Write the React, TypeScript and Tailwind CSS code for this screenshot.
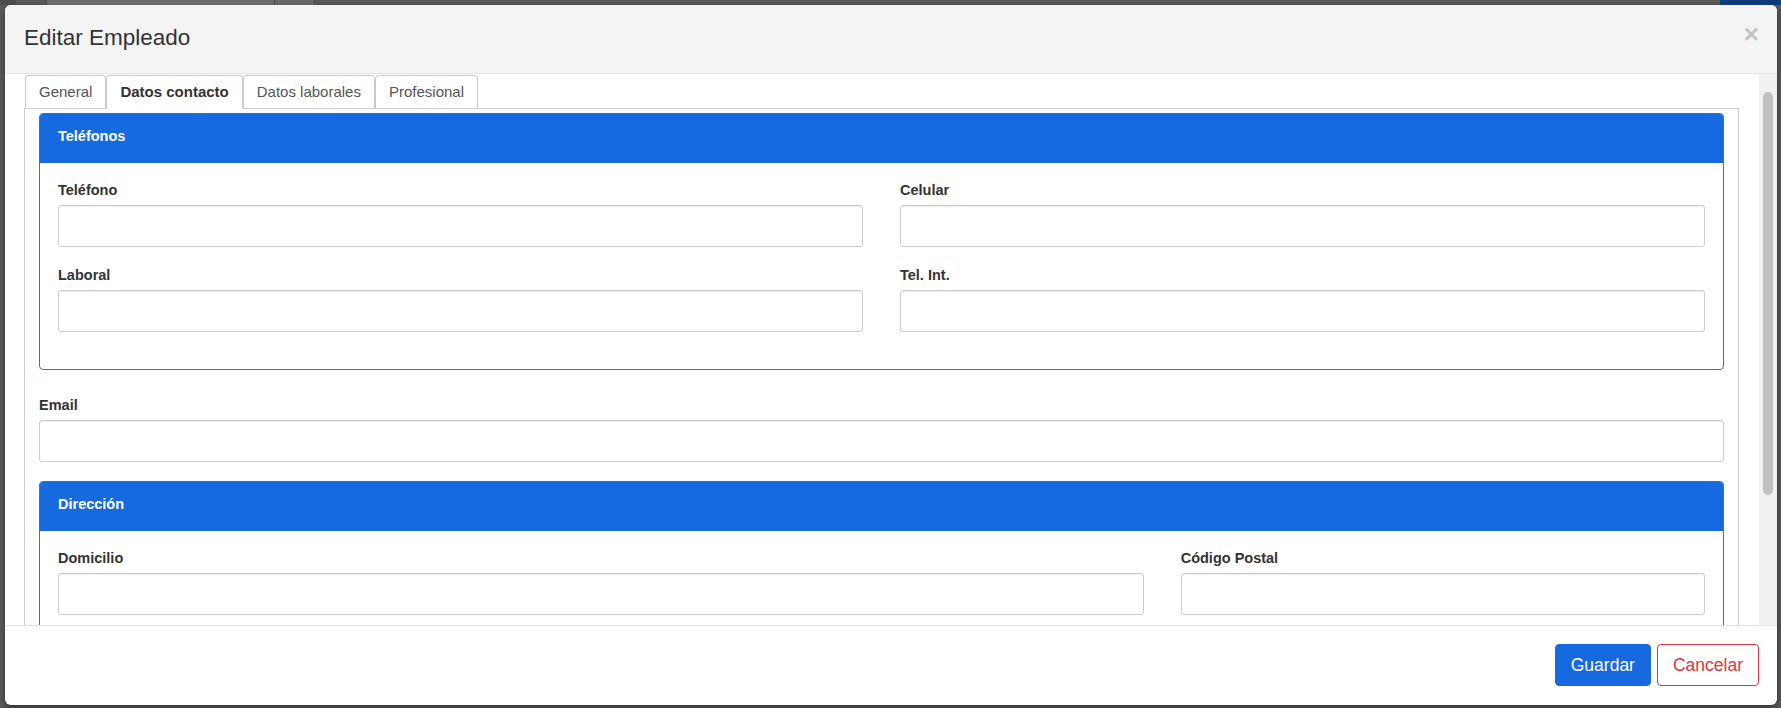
import React from 'react';

const Field: React.FC<{ label: string; className?: string }> = ({ label, className }) => (
  <div className={className}>
    <label className="block mb-[5px] leading-[20px] text-[14.5px] font-bold text-[#333]">{label}</label>
    <input
      type="text"
      className="block w-full h-[42px] rounded-[3px] border border-[#ccc] bg-white shadow-[inset_0_1px_1px_rgba(0,0,0,0.075)] outline-none"
    />
  </div>
);

const Panel: React.FC<{ title: string; children: React.ReactNode; className?: string }> = ({ title, children, className }) => (
  <div className={`rounded-[4px] border border-[#2a73d9] overflow-hidden ${className ?? ''}`}>
    <div className="h-[49px] bg-[#1769e0] px-[18px] pt-[12px] text-[14.5px] leading-[20px] font-bold text-white">{title}</div>
    {children}
  </div>
);

const tabs = ['General', 'Datos contacto', 'Datos laborales', 'Profesional'];

const App: React.FC = () => {
  return (
    <div className="w-[1781px] h-[708px] overflow-hidden bg-[#5c5c5c] font-['Liberation_Sans',Arial,sans-serif]">
      {/* page behind the backdrop */}
      <div className="flex h-[5px]">
        <div className="w-[16px] bg-[#4a4a4a]" />
        <div className="ml-[30px] w-[229px] bg-[#6a6a6a] border-x border-[#4a4a4a]" />
        <div className="w-[40px] bg-[#666] border-r border-[#4a4a4a]" />
        <div className="flex-1" />
        <div className="w-[61px] bg-[#0d3a7a]" />
      </div>

      <div className="ml-[5px] w-[1772px] h-[700px] flex flex-col rounded-[6px] bg-white overflow-hidden shadow-[0_3px_9px_rgba(0,0,0,0.5)]">
        {/* header */}
        <div className="h-[69px] shrink-0 flex items-start justify-between bg-[#f4f4f4] border-b border-[#e5e5e5] pl-[19px] pr-[18px]">
          <h4 className="mt-[21px] text-[22.5px] leading-[23px] text-[#333]">Editar Empleado</h4>
          <span className="mt-[16px] text-[26px] leading-none font-bold text-[#c2c2c2]">×</span>
        </div>

        {/* body */}
        <div className="flex-1 flex min-h-0">
          <div className="flex-1 min-w-0 overflow-hidden pl-[19px] pr-[20px] pt-px">
            <div className="flex items-end h-[34px] border-b border-[#ccc] pl-px">
              {tabs.map((t, i) =>
                i === 1 ? (
                  <div
                    key={t}
                    className="h-[34px] -mb-px flex items-center px-[13px] border border-b-0 border-[#ccc] rounded-t-[4px] bg-white text-[15px] font-bold text-[#333]"
                  >
                    {t}
                  </div>
                ) : (
                  <div
                    key={t}
                    className="h-[33px] flex items-center px-[13px] border border-b-0 border-[#ccc] rounded-t-[4px] bg-white text-[15px] text-[#555]"
                  >
                    {t}
                  </div>
                )
              )}
            </div>

            <div className="h-full border-x border-[#ccc] px-[14px] pt-[4px]">
              <Panel title="Teléfonos" className="mb-[25px]">
                <div className="grid grid-cols-2 gap-x-[37px] px-[18px] pt-[17px] pb-[1px]">
                  <Field label="Teléfono" className="mb-[18px]" />
                  <Field label="Celular" className="mb-[18px]" />
                  <Field label="Laboral" className="mb-[18px]" />
                  <Field label="Tel. Int." className="mb-[18px]" />
                </div>
                <div className="h-[18px]" />
              </Panel>

              <Field label="Email" className="mb-[19px]" />

              <Panel title="Dirección">
                <div className="grid grid-cols-[1085fr_524fr] gap-x-[37px] px-[18px] pt-[17px] pb-[19px]">
                  <Field label="Domicilio" className="mb-[18px]" />
                  <Field label="Código Postal" className="mb-[18px]" />
                </div>
              </Panel>
            </div>
          </div>

          {/* scrollbar */}
          <div className="w-[18px] shrink-0 bg-[#f1f1f1] pt-[18px] flex justify-center">
            <div className="w-[10px] h-[403px] rounded-full bg-[#c1c1c1]" />
          </div>
        </div>

        {/* footer */}
        <div className="h-[80px] shrink-0 flex items-center justify-end gap-[6px] border-t border-[#e5e5e5] pr-[18px] pb-[1px]">
          <button className="h-[42px] px-[15px] rounded-[4px] bg-[#1769e0] border border-[#1769e0] text-[17.5px] text-white">
            Guardar
          </button>
          <button className="h-[42px] px-[15px] rounded-[4px] bg-white border border-[#dc3545] text-[17.5px] text-[#dc3545]">
            Cancelar
          </button>
        </div>
      </div>
    </div>
  );
};

export default App;
